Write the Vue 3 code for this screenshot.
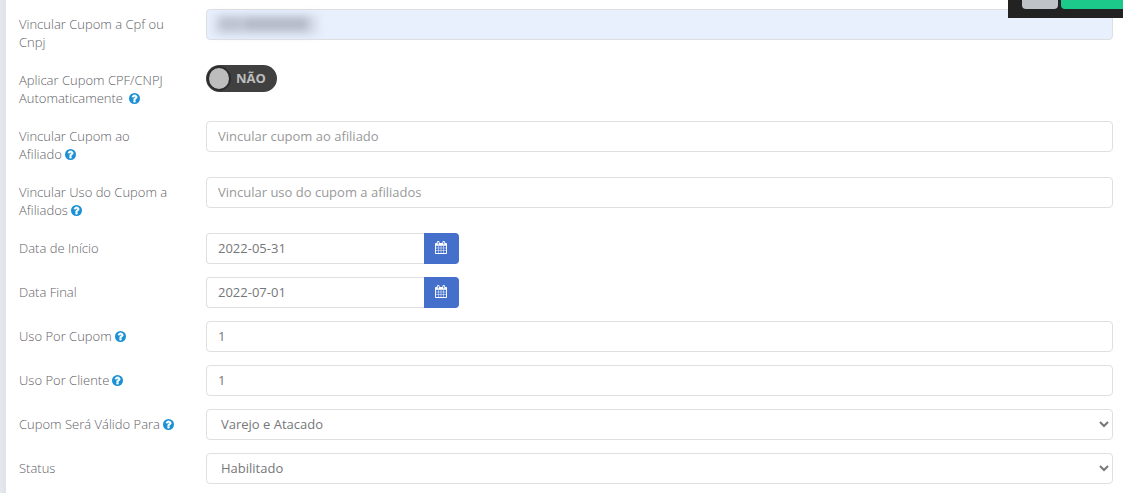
<script setup>
import { reactive } from 'vue'

const form = reactive({
  document: '',
  autoApply: false,
  affiliate: '',
  affiliateUse: '',
  start: '2022-05-31',
  end: '2022-07-01',
  perCoupon: '1',
  perCustomer: '1',
  validFor: 'Varejo e Atacado',
  status: 'Habilitado',
})

const rows = [
  { key: 'document', text: 'Vincular Cupom a Cpf ou Cnpj', type: 'masked' },
  { key: 'autoApply', text: 'Aplicar Cupom CPF/CNPJ', last: 'Automaticamente', help: true, wide: true, type: 'toggle' },
  { key: 'affiliate', text: 'Vincular Cupom ao', last: 'Afiliado', help: true, type: 'text', placeholder: 'Vincular cupom ao afiliado' },
  { key: 'affiliateUse', text: 'Vincular Uso do Cupom a', last: 'Afiliados', help: true, type: 'text', placeholder: 'Vincular uso do cupom a afiliados' },
  { key: 'start', text: 'Data de Início', type: 'date' },
  { key: 'end', text: 'Data Final', type: 'date' },
  { key: 'perCoupon', text: 'Uso Por', last: 'Cupom', help: true, type: 'text' },
  { key: 'perCustomer', text: 'Uso Por', last: 'Cliente', help: true, type: 'text' },
  { key: 'validFor', text: 'Cupom Será Válido', last: 'Para', help: true, type: 'select', options: ['Varejo e Atacado', 'Varejo', 'Atacado'] },
  { key: 'status', text: 'Status', type: 'select', options: ['Habilitado', 'Desabilitado'] },
]
</script>

<template>
  <div class="page">
    <form class="panel" @submit.prevent>
      <div v-for="row in rows" :key="row.key" class="row">
        <label class="label" :for="row.key">
          {{ row.text }}
          <span v-if="row.last" class="last">{{ row.last }}<svg
            v-if="row.help" class="help" :class="{ wide: row.wide }" viewBox="0 0 1536 1536" aria-hidden="true">
            <path fill="#1c90d4" d="M768 0a768 768 0 1 0 0 1536A768 768 0 1 0 768 0Z" />
            <path fill="#fff" stroke="#fff" stroke-width="60" d="M896 1248v-192q0-14-9-23t-23-9H672q-14 0-23 9t-9 23v192q0 14 9 23t23 9h192q14 0 23-9t9-23Zm256-672q0-88-55.500-163T958 297t-170-41q-243 0-371 213-15 24 8 42l132 100q7 6 19 6 16 0 25-12 53-68 86-92 34-24 86-24 48 0 85.500 26t37.500 59q0 38-20 61t-68 45q-63 28-115.500 86.500T640 892v36q0 14 9 23t23 9h192q14 0 23-9t9-23q0-19 21.500-49.500T972 829q32-18 49-28.500t46-35 44.500-48 28-60.500 12.500-81Z" />
          </svg></span>
        </label>

        <div v-if="row.type === 'masked'" class="masked">
          <input :id="row.key" v-model="form[row.key]" class="control filled" type="text">
          <span class="haze" aria-hidden="true"></span>
          <span class="smudge" aria-hidden="true"><i></i><i></i></span>
        </div>

        <div v-else-if="row.type === 'toggle'" class="switch-box">
          <span class="switch">
            <input :id="row.key" v-model="form[row.key]" type="checkbox" role="switch">
            <span class="knob"></span>
            <span class="state">{{ form[row.key] ? 'SIM' : 'NÃO' }}</span>
          </span>
        </div>

        <div v-else-if="row.type === 'date'" class="date">
          <input :id="row.key" v-model="form[row.key]" class="control" type="text">
          <button class="calendar" type="button" :aria-label="'Abrir calendário: ' + row.text">
            <svg viewBox="0 0 1664 1792" aria-hidden="true">
              <path fill="#fff" d="M128 1664h288v-288H128v288zm352 0h320v-288H480v288zm-352-352h288V992H128v320zm352 0h320V992H480v320zM128 928h288V640H128v288zm736 736h320v-288H864v288zM480 928h320V640H480v288zm768 736h288v-288h-288v288zm-384-352h320V992H864v320zM512 448V160q0-13-9.500-22.500T480 128h-64q-13 0-22.500 9.500T384 160v288q0 13 9.500 22.500T416 480h64q13 0 22.500-9.500T512 448zm736 864h288V992h-288v320zM864 928h320V640H864v288zm384 0h288V640h-288v288zm32-480V160q0-13-9.500-22.500T1248 128h-64q-13 0-22.500 9.500T1152 160v288q0 13 9.500 22.500t22.500 9.500h64q13 0 22.500-9.500T1280 448zm384-64v1280q0 52-38 90t-90 38H128q-52 0-90-38t-38-90V384q0-52 38-90t90-38h128v-96q0-66 47-113T416 0h64q66 0 113 47t47 113v96h384v-96q0-66 47-113t113-47h64q66 0 113 47t47 113v96h128q52 0 90 38t38 90z" fill-rule="evenodd" />
            </svg>
          </button>
        </div>

        <select v-else-if="row.type === 'select'" :id="row.key" v-model="form[row.key]" class="control">
          <option v-for="option in row.options" :key="option">{{ option }}</option>
        </select>

        <input v-else :id="row.key" v-model="form[row.key]" class="control" type="text" :placeholder="row.placeholder">
      </div>
    </form>

    <div class="toolbar">
      <button class="action grey" type="button" aria-label="Cancelar"></button>
      <button class="action green" type="button" aria-label="Salvar"></button>
    </div>
  </div>
</template>

<style>
body {
  background: #fff;
  overflow: hidden;
}
</style>

<style scoped>
.page {
  position: relative;
  min-height: 100vh;
  padding-left: 6px;
  background: linear-gradient(90deg, #e5e8ec, #dfe3e7 6px);
  box-sizing: border-box;
  font: 13px/18px "Open Sans", sans-serif;
  color: #76777a;
}
.panel {
  display: flex;
  flex-direction: column;
  gap: 13px;
  min-height: 100vh;
  padding: 9px 10px 9px 13px;
  box-sizing: border-box;
  background: #fff;
}
.row {
  display: grid;
  grid-template-columns: 157px 1fr;
  column-gap: 30px;
  align-items: start;
}
.label {
  padding: 6px 0 1px;
  font-weight: 300;
  color: #5f6267;
}
.last {
  white-space: nowrap;
}
.help {
  width: 11px;
  height: 11px;
  margin-left: 3px;
  vertical-align: -1px;
}
.help.wide {
  margin-left: 6px;
}
.control {
  display: block;
  width: 100%;
  height: 31px;
  padding: 0 11px 2px;
  box-sizing: border-box;
  border: 1px solid #dddfe1;
  border-radius: 4px;
  background: #fff;
  font: inherit;
  color: #76777a;
  outline: none;
}
select.control {
  padding: 0 0 2px 10px;
}
.control::placeholder {
  color: #999;
  opacity: 1;
}
.control.filled {
  background: #e8f0fe;
}
.masked {
  position: relative;
}
.haze {
  position: absolute;
  left: 8px;
  top: 6px;
  width: 104px;
  height: 20px;
  background: #d5dce9;
  filter: blur(4px);
  pointer-events: none;
}
.smudge {
  position: absolute;
  left: 14px;
  top: 9px;
  display: flex;
  gap: 2px;
  filter: blur(4px);
  pointer-events: none;
}
.smudge i {
  width: 22px;
  height: 12px;
  background: #b9bfcb;
}
.smudge i + i {
  width: 64px;
  background: #b1b7c3;
}
.switch-box {
  display: flex;
}
.switch {
  position: relative;
  display: flex;
  align-items: center;
  gap: 5px;
  width: 71px;
  height: 27px;
  padding-left: 1px;
  box-sizing: border-box;
  border-radius: 14px;
  background: #404040;
}
.switch input {
  position: absolute;
  inset: 0;
  width: 100%;
  height: 100%;
  margin: 0;
  opacity: 0;
}
.knob {
  width: 24px;
  height: 25px;
  box-sizing: border-box;
  border: 2px solid #2c2c2c;
  border-radius: 50%;
  background: #bdbdbd;
}
.state {
  padding-bottom: 2px;
  font-weight: 700;
  color: #bdbdbd;
}
.date {
  display: flex;
  width: 253px;
}
.date .control {
  flex: 1;
  min-width: 0;
  border-right: 0;
  border-radius: 4px 0 0 4px;
}
.calendar {
  display: flex;
  align-items: center;
  justify-content: center;
  width: 35px;
  padding: 0 1px 2px 0;
  border: 0;
  border-radius: 0 4px 4px 0;
  background: #446fcb;
}
.calendar svg {
  width: 12px;
  height: 13px;
}
.toolbar {
  position: absolute;
  top: 0;
  right: 0;
  display: flex;
  gap: 3px;
  width: 115px;
  height: 18px;
  padding-left: 14px;
  box-sizing: border-box;
  background: #222;
}
.action {
  height: 9px;
  padding: 0;
  border: 0;
}
.grey {
  width: 36px;
  border-radius: 0 0 4px 4px;
  background: #bdc3c7;
}
.green {
  flex: 1;
  border-radius: 0 0 0 4px;
  background: #1dc98a;
}
</style>
